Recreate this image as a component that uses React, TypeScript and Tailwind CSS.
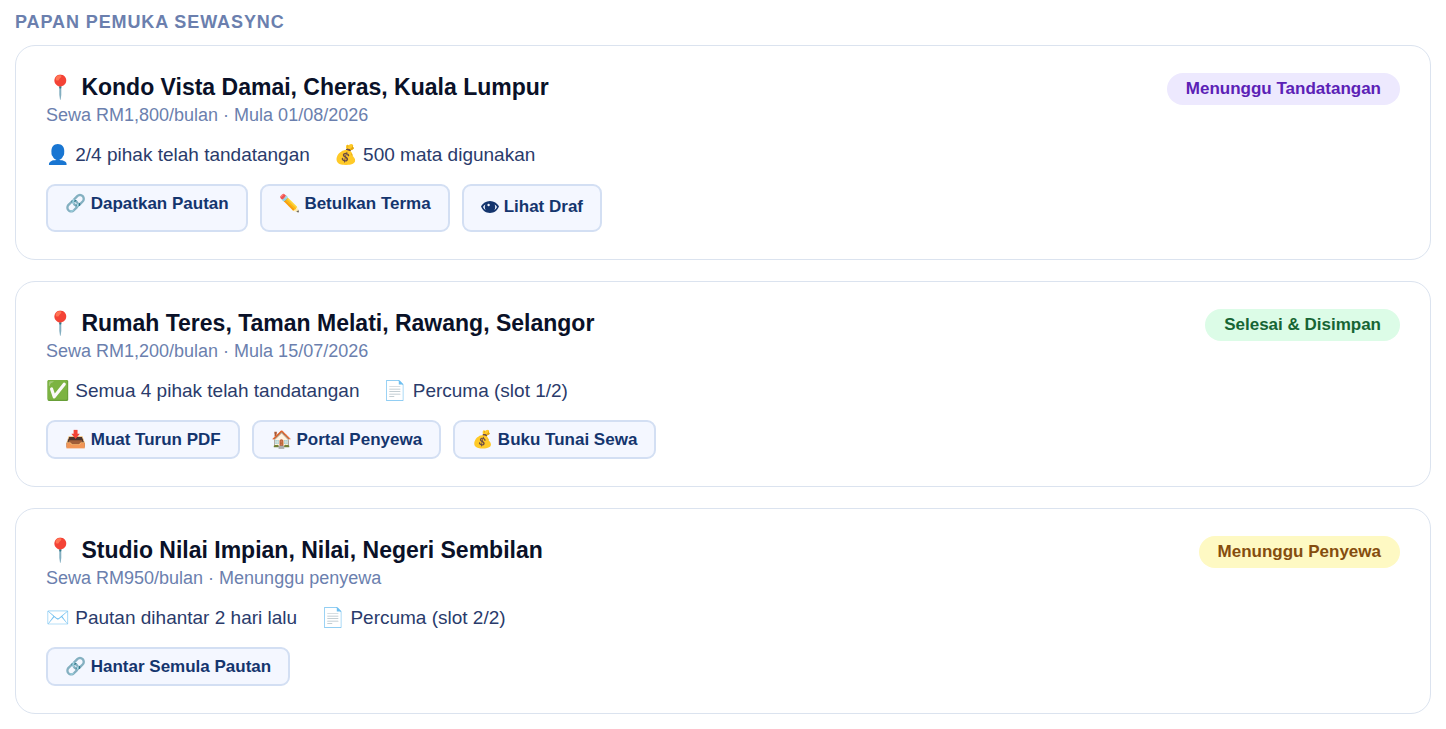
// Rental agreement dashboard: one card per property with status, progress and actions.

import { clsx } from "clsx";

type Tone = "purple" | "green" | "yellow";

interface Action {
  label: string;
  emoji?: string;
}

interface Agreement {
  title: string;
  subtitle: string;
  status: string;
  tone: Tone;
  meta: string[];
  actions: Action[];
}

const agreements: Agreement[] = [
  {
    title: "Kondo Vista Damai, Cheras, Kuala Lumpur",
    subtitle: "Sewa RM1,800/bulan · Mula 01/08/2026",
    status: "Menunggu Tandatangan",
    tone: "purple",
    meta: ["👤 2/4 pihak telah tandatangan", "💰 500 mata digunakan"],
    actions: [
      { emoji: "🔗", label: "Dapatkan Pautan" },
      { emoji: "✏️", label: "Betulkan Terma" },
      { label: "Lihat Draf" },
    ],
  },
  {
    title: "Rumah Teres, Taman Melati, Rawang, Selangor",
    subtitle: "Sewa RM1,200/bulan · Mula 15/07/2026",
    status: "Selesai & Disimpan",
    tone: "green",
    meta: ["✅ Semua 4 pihak telah tandatangan", "📄 Percuma (slot 1/2)"],
    actions: [
      { emoji: "📥", label: "Muat Turun PDF" },
      { emoji: "🏠", label: "Portal Penyewa" },
      { emoji: "💰", label: "Buku Tunai Sewa" },
    ],
  },
  {
    title: "Studio Nilai Impian, Nilai, Negeri Sembilan",
    subtitle: "Sewa RM950/bulan · Menunggu penyewa",
    status: "Menunggu Penyewa",
    tone: "yellow",
    meta: ["✉️ Pautan dihantar 2 hari lalu", "📄 Percuma (slot 2/2)"],
    actions: [{ emoji: "🔗", label: "Hantar Semula Pautan" }],
  },
];

const toneStyles: Record<Tone, string> = {
  purple: "bg-[#ede9fe] text-[#5b21b6]",
  green: "bg-[#dcfce7] text-[#166534]",
  yellow: "bg-[#fef9c3] text-[#854d0e]",
};

const EyeIcon = () => (
  <svg viewBox="0 0 18 12" className="h-3 w-[18px] shrink-0" aria-hidden="true">
    <path
      fill="currentColor"
      fillRule="evenodd"
      d="M9 0C13 0 16.2 2.2 18 5.3C16.6 9.4 13.3 12 9 12C4.7 12 1.4 9.4 0 5.3C1.8 2.2 5 0 9 0ZM4.4 3.6C3.4 4.2 2.6 5 2 5.9C2.6 7.3 3.5 8.4 4.7 9.2C4.1 8.2 3.8 7.1 3.8 6C3.8 5.1 4 4.3 4.4 3.6ZM13.6 3.6C14 4.3 14.2 5.1 14.2 6C14.2 7.1 13.9 8.2 13.3 9.2C14.5 8.4 15.4 7.3 16 5.9C15.4 5 14.6 4.2 13.6 3.6ZM7.6 2.8A1.2 1.2 0 1 0 7.6 5.2A1.2 1.2 0 1 0 7.6 2.8Z"
    />
  </svg>
);

const StatusBadge = ({ label, tone }: { label: string; tone: Tone }) => (
  <span className={clsx("shrink-0 rounded-full px-[19px] py-1.5 text-[17px] leading-5 font-bold", toneStyles[tone])}>
    {label}
  </span>
);

const ActionButton = ({ action }: { action: Action }) => (
  <button
    type="button"
    className="flex items-start rounded-[9px] border-2 border-[#d3dff3] bg-[#f4f7ff] px-[17px] py-[7px] text-[17px] leading-[21px] font-bold text-[#14356e]"
  >
    {action.emoji ? (
      `${action.emoji} ${action.label}`
    ) : (
      <span className="flex items-center gap-[5px] pb-0.5 leading-7">
        <EyeIcon />
        {action.label}
      </span>
    )}
  </button>
);

const AgreementCard = ({ agreement }: { agreement: Agreement }) => (
  <article className="rounded-[20px] border border-[#dbe3ef] bg-white px-[30px] py-[27px]">
    <div className="flex items-start justify-between gap-4">
      <div>
        <h2 className="text-[23px] leading-7 font-bold text-[#0a1128]">📍 {agreement.title}</h2>
        <p className="text-[18px] leading-7 text-[#6b7fae]">{agreement.subtitle}</p>
      </div>
      <StatusBadge label={agreement.status} tone={agreement.tone} />
    </div>
    <div className="mt-3 flex flex-wrap gap-x-6 gap-y-2 text-[19px] leading-7 text-[#2a3b6b]">
      {agreement.meta.map((item) => (
        <span key={item}>{item}</span>
      ))}
    </div>
    <div className="mt-[15px] flex flex-wrap gap-3">
      {agreement.actions.map((action) => (
        <ActionButton key={action.label} action={action} />
      ))}
    </div>
  </article>
);

const App = () => {
  return (
    <main className="bg-white px-[15px] pt-[11px] pb-4 font-['Liberation_Sans',Arial,sans-serif]">
      <h1 className="mb-3 text-[18px] leading-[22px] font-bold tracking-wider text-[#6b7fae] uppercase">
        Papan Pemuka SewaSync
      </h1>
      <div className="flex flex-col gap-[21px]">
        {agreements.map((agreement) => (
          <AgreementCard key={agreement.title} agreement={agreement} />
        ))}
      </div>
    </main>
  );
};

export default App;
